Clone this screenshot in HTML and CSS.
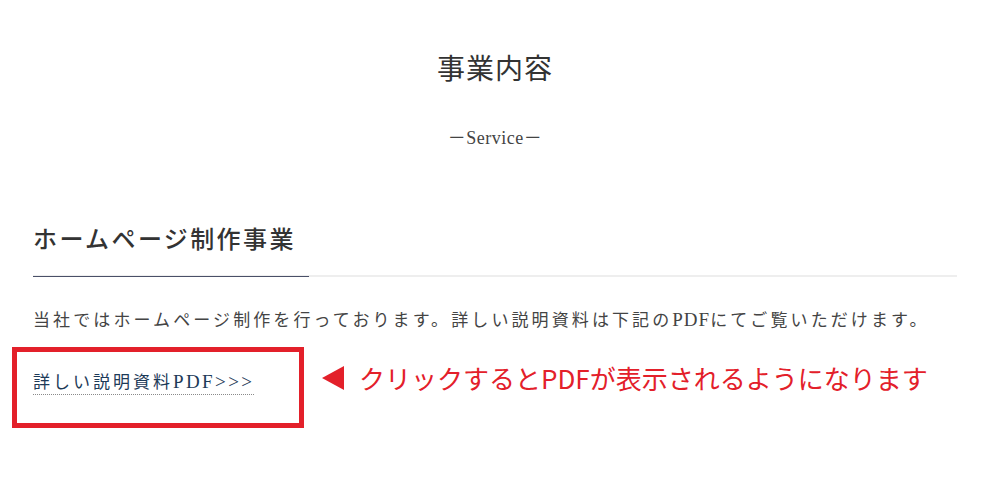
FILE: index.html
```html
<!DOCTYPE html>
<html lang="ja">
<head>
  <meta charset="UTF-8" />
  <meta name="viewport" content="width=device-width, initial-scale=1.0"/>
  <title>事業内容</title>
  <link rel="stylesheet" href="styles.css">
</head>
<body>
  <main class="page">
    <!-- Section heading -->
    <header class="section-head">
      <h2 class="section-title">事業内容</h2>
      <p class="section-sub">－Service－</p>
    </header>

    <section class="business">
      <h3 class="business-title">ホームページ制作事業</h3>
      <p class="business-text">当社ではホームページ制作を行っております。詳しい説明資料は下記の<span class="latin">PDF</span>にてご覧いただけます。</p>

      <!-- PDF link with annotation -->
      <div class="pdf-row">
        <div class="pdf-box">
          <a class="pdf-link" href="#">詳しい説明資料<span class="latin link-latin">PDF&gt;&gt;&gt;</span></a>
        </div>
        <div class="note">
          <svg class="note-arrow" width="22" height="24" viewBox="0 0 22 24">
            <polygon points="0,12 22,0 22,24" fill="#e3202a"/>
          </svg>
          <span class="note-text">クリックするとPDFが表示されるようになります</span>
        </div>
      </div>
    </section>
  </main>
</body>
</html>
```

FILE: styles.css
```css
body {
  margin: 0;
  background: #fff;
  color: #333;
  font-family: 'Liberation Serif', 'Noto Sans CJK JP', serif;
}

.page {
  padding: 0 32px 0 33px;
}

/* Section heading */
.section-head {
  text-align: center;
  padding-top: 50px;
}

.section-title {
  margin: 0;
  font-size: 28px;
  line-height: 40px;
  font-weight: normal;
  letter-spacing: 1px;
  color: #333;
}

.section-sub {
  margin: 36px 0 0;
  font-size: 18px;
  line-height: 24px;
  letter-spacing: 0.5px;
  color: #444;
}

/* Business block */
.business {
  margin-top: 73px;
}

.business-title {
  position: relative;
  margin: 0;
  padding-bottom: 18px;
  font-size: 24px;
  line-height: 34px;
  font-weight: 500;
  letter-spacing: 0.1em;
  color: #333;
  border-bottom: 2px solid #eeeeee;
}

.business-title::after {
  content: "";
  position: absolute;
  left: 0;
  bottom: -2px;
  width: 276px;
  height: 1px;
  background: #4a5068;
}

.business-text {
  margin: 29px 0 0;
  font-size: 17px;
  line-height: 28px;
  letter-spacing: 3.1px;
  color: #444;
}

.latin {
  font-size: 19px;
  letter-spacing: 1px;
}

.pdf-row {
  display: flex;
  align-items: flex-start;
  margin: 12px 0 0 -21px;
}

.pdf-box {
  width: 266px;
  height: 61px;
  padding: 10px 0 0 16px;
  border: 5px solid #e3202a;
}

.pdf-link {
  display: inline-block;
  margin-top: 9px;
  font-size: 17px;
  line-height: 22px;
  letter-spacing: 3px;
  color: #1d3a58;
  text-decoration: none;
  border-bottom: 1px dotted #8a8a8a;
}

.link-latin {
  letter-spacing: 2.4px;
}

.note {
  display: flex;
  align-items: center;
  gap: 15px;
  margin: 13px 0 0 18px;
}

.note-text {
  font-family: 'Noto Sans CJK JP', sans-serif;
  font-size: 26px;
  line-height: 36px;
  font-weight: 400;
  letter-spacing: 0;
  color: #e3202a;
}
```
